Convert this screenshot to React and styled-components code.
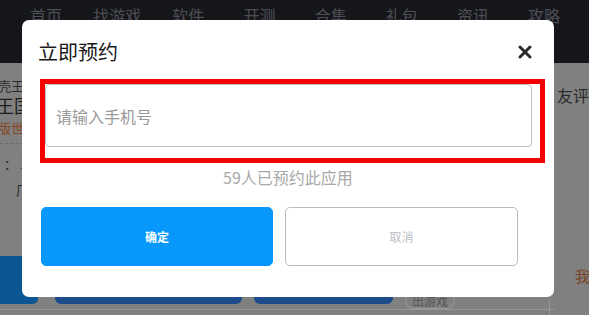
import React from "react";
import styled, { createGlobalStyle } from "styled-components";

const Global = createGlobalStyle`
  html, body { margin: 0; padding: 0; }
  body { font-family: "Noto Sans CJK SC", "Noto Sans", sans-serif; }
  * { box-sizing: border-box; }
`;

const Page = styled.div`
  position: relative;
  width: 589px;
  height: 315px;
  overflow: hidden;
  background: #808080;
  display: flex;
  flex-direction: column;
`;

const NavBar = styled.div`
  height: 63px;
  flex: none;
  background: #15161a;
  display: grid;
  grid-template-columns: repeat(8, 71.15px);
  padding: 5px 0 0 10.5px;
`;

const NavItem = styled.span`
  text-align: center;
  font-size: 16px;
  line-height: 20px;
  color: #4d4f55;
`;

const Body = styled.div`
  flex: 1;
  display: flex;
`;

const Main = styled.div`
  flex: 1;
  display: flex;
  flex-direction: column;
  border-bottom: 1px solid #959595;
  margin-bottom: 5px;
`;

const Info = styled.div`
  display: flex;
  flex-direction: column;
  padding-top: 15px;
`;

const Line = styled.div`
  font-size: ${(p) => p.$size || 13}px;
  line-height: ${(p) => p.$lh || 16}px;
  color: ${(p) => p.$color || "#2a2a2a"};
  margin-left: ${(p) => p.$indent || 0}px;
  margin-top: ${(p) => p.$mt || 0}px;
  white-space: nowrap;
`;

const Dotted = styled.div`
  width: 120px;
  margin-top: 7px;
  border-top: 1px dashed #6b6b6b;
`;

const Actions = styled.div`
  margin-top: auto;
  display: flex;
  align-items: flex-start;
  height: 48px;
  margin-bottom: 5px;
`;

const BlueBtn = styled.div`
  width: ${(p) => p.$w}px;
  height: 48px;
  margin-left: ${(p) => p.$ml || 0}px;
  background: ${(p) => p.$bg};
  border-radius: ${(p) => (p.$edge ? "0 5px 5px 0" : "6px")};
`;

const Chip = styled.div`
  margin-left: 12px;
  align-self: flex-end;
  margin-bottom: -5px;
  padding: 0 6px;
  height: 16px;
  border: 1px solid #9a9a9a;
  border-radius: 8px;
  font-size: 12px;
  line-height: 14px;
  color: #555;
`;

const Aside = styled.div`
  width: 35px;
  display: flex;
  flex-direction: column;
  padding-left: 3px;
`;

const AsideLine = styled.div`
  margin-top: auto;
  height: 15px;
  width: 1px;
  background: #979797;
  margin-left: -8px;
`;

const Modal = styled.div`
  position: absolute;
  left: 22px;
  top: 20px;
  width: 532px;
  height: 277px;
  background: #fff;
  border-radius: 7px;
  display: flex;
  flex-direction: column;
`;

const Header = styled.div`
  display: flex;
  align-items: center;
  justify-content: space-between;
  padding: 20px 22px 0 16px;
`;

const Title = styled.h2`
  margin: 0;
  font-size: 20px;
  line-height: 24px;
  font-weight: 400;
  color: #1a1a1a;
`;

const Close = styled.button`
  border: 0;
  background: none;
  padding: 0;
  width: 14px;
  height: 14px;
  display: flex;
  cursor: pointer;
`;

const Highlight = styled.div`
  margin: 15px 0 0 18px;
  width: 505px;
  border: 5px solid #f40000;
  padding: 0 8px 11px 0;
`;

const Input = styled.input`
  display: block;
  width: 100%;
  height: 63px;
  border: 1px solid #b9c1c8;
  border-radius: 4px;
  padding: 0 0 0 10px;
  font-family: "Noto Sans CJK SC", "Noto Sans", sans-serif;
  font-size: 16px;
  color: #333;
  outline: none;
  &::placeholder { color: #9a9a9a; }
`;

const Count = styled.div`
  margin-top: 3px;
  text-align: center;
  font-size: 16px;
  line-height: 22px;
  color: #a8a8a8;
`;

const Buttons = styled.div`
  display: flex;
  gap: 12px;
  margin: 19px 0 0 19px;
`;

const Btn = styled.button`
  width: ${(p) => p.$w}px;
  height: 59px;
  border-radius: 5px;
  font-family: "Noto Sans CJK SC", "Noto Sans", sans-serif;
  font-size: 12px;
  font-weight: ${(p) => (p.$primary ? 700 : 400)};
  cursor: pointer;
  background: ${(p) => (p.$primary ? "#0898fc" : "#fff")};
  color: ${(p) => (p.$primary ? "#fff" : "#bcc0c4")};
  border: 1px solid ${(p) => (p.$primary ? "#0898fc" : "#bdbdbd")};
`;

const navItems = ["首页", "找游戏", "软件", "开测", "合集", "礼包", "资讯", "攻略"];

export default function App() {
  return (
    <>
      <Global />
      <Page>
        <NavBar>
          {navItems.map((n) => (
            <NavItem key={n}>{n}</NavItem>
          ))}
        </NavBar>
        <Body>
          <Main>
            <Info>
              <Line $indent={-2}>壳王</Line>
              <Line $size={18} $lh={18} $indent={-4} $mt={2} $color="#1c1c1c">
                王国
              </Line>
              <Line $indent={-2} $mt={6} $color="#86461c">
                版世
              </Line>
              <Dotted />
              <Line $indent={4} $mt={12}>
                ：&nbsp;1
              </Line>
              <Line $indent={16} $mt={10}>
                厂
              </Line>
            </Info>
            <Actions>
              <BlueBtn $w={38} $bg="#0b5693" $edge />
              <BlueBtn $w={187} $ml={17} $bg="#1d4a8a" />
              <BlueBtn $w={139} $ml={12} $bg="#1d4a8a" />
              <Chip>出游戏</Chip>
            </Actions>
          </Main>
          <Aside>
            <Line $size={16} $lh={20} $mt={22} $color="#2b2b2b">
              友评
            </Line>
            <Line $size={15} $lh={18} $mt={162} $indent={18} $color="#7d4424">
              我
            </Line>
            <AsideLine />
          </Aside>
        </Body>
        <Modal>
          <Header>
            <Title>立即预约</Title>
            <Close aria-label="关闭">
              <svg width="14" height="14" viewBox="0 0 14 14">
                <path d="M2 2L12 12M12 2L2 12" stroke="#2b2b2b" strokeWidth="3" strokeLinecap="round" />
              </svg>
            </Close>
          </Header>
          <Highlight>
            <Input placeholder="请输入手机号" />
          </Highlight>
          <Count>59人已预约此应用</Count>
          <Buttons>
            <Btn $primary $w={232}>确定</Btn>
            <Btn $w={233}>取消</Btn>
          </Buttons>
        </Modal>
      </Page>
    </>
  );
}
